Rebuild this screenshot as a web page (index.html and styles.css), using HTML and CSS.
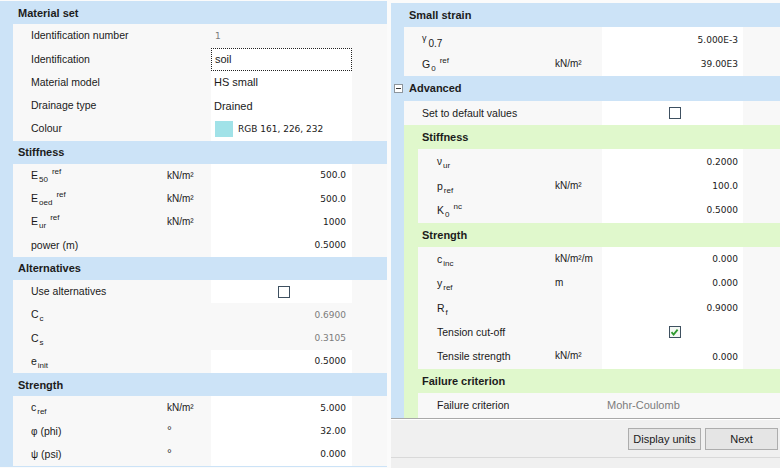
FILE: index.html
```html
<!DOCTYPE html>
<html>
<head>
<meta charset="utf-8">
<link rel="stylesheet" href="styles.css">
</head>
<body>
<div class="panel panel-left">
  <div class="head">Material set</div>
  <div class="group">
    <div class="strip"></div>
    <div class="rows">
      <div class="row"><div class="lbl">Identification number</div><div class="unit"></div><div class="val ro left">1</div><div></div></div>
      <div class="row"><div class="lbl">Identification</div><div class="unit"></div><div class="val left focus txt">soil</div><div></div></div>
      <div class="row"><div class="lbl">Material model</div><div class="unit"></div><div class="val left txt">HS small</div><div></div></div>
      <div class="row"><div class="lbl">Drainage type</div><div class="unit"></div><div class="val left txt">Drained</div><div></div></div>
      <div class="row"><div class="lbl">Colour</div><div class="unit"></div><div class="val left"><span class="swatch"></span>RGB 161, 226, 232</div><div></div></div>
    </div>
  </div>
  <div class="head">Stiffness</div>
  <div class="group">
    <div class="strip"></div>
    <div class="rows">
      <div class="row"><div class="lbl">E<span class="sb">50</span><span class="sp">ref</span></div><div class="unit">kN/m²</div><div class="val">500.0</div><div></div></div>
      <div class="row"><div class="lbl">E<span class="sb">oed</span><span class="sp">ref</span></div><div class="unit">kN/m²</div><div class="val">500.0</div><div></div></div>
      <div class="row"><div class="lbl">E<span class="sb">ur</span><span class="sp">ref</span></div><div class="unit">kN/m²</div><div class="val">1000</div><div></div></div>
      <div class="row"><div class="lbl">power (m)</div><div class="unit"></div><div class="val">0.5000</div><div></div></div>
    </div>
  </div>
  <div class="head">Alternatives</div>
  <div class="group">
    <div class="strip"></div>
    <div class="rows">
      <div class="row"><div class="lbl">Use alternatives</div><div class="unit"></div><div class="val center"><span class="cb"></span></div><div></div></div>
      <div class="row"><div class="lbl">C<span class="sb">c</span></div><div class="unit"></div><div class="val ro">0.6900</div><div></div></div>
      <div class="row"><div class="lbl">C<span class="sb">s</span></div><div class="unit"></div><div class="val ro">0.3105</div><div></div></div>
      <div class="row"><div class="lbl">e<span class="sb">init</span></div><div class="unit"></div><div class="val">0.5000</div><div></div></div>
    </div>
  </div>
  <div class="head">Strength</div>
  <div class="group last">
    <div class="strip"></div>
    <div class="rows">
      <div class="row"><div class="lbl">c<span class="sb">ref</span></div><div class="unit">kN/m²</div><div class="val">5.000</div><div></div></div>
      <div class="row"><div class="lbl"><span class="greek">φ</span> (phi)</div><div class="unit deg">°</div><div class="val">32.00</div><div></div></div>
      <div class="row"><div class="lbl"><span class="greek">ψ</span> (psi)</div><div class="unit deg">°</div><div class="val">0.000</div><div></div></div>
    </div>
  </div>
</div>

<div class="panel panel-right">
  <div class="scroll">
    <div class="head">Small strain</div>
    <div class="group">
      <div class="strip"></div>
      <div class="rows">
        <div class="row"><div class="lbl"><span class="gamma">γ</span><span class="sb big">0.7</span></div><div class="unit"></div><div class="val">5.000E-3</div><div></div></div>
        <div class="row"><div class="lbl">G<span class="sb">0</span><span class="sp">ref</span></div><div class="unit">kN/m²</div><div class="val">39.00E3</div><div></div></div>
      </div>
    </div>
    <div class="head toggle-head"><span class="tog"><span class="minus"></span></span>Advanced</div>
    <div class="group">
      <div class="strip"></div>
      <div class="rows">
        <div class="row"><div class="lbl">Set to default values</div><div class="unit"></div><div class="val center"><span class="cb"></span></div><div></div></div>
        <div class="ghead">Stiffness</div>
        <div class="sub">
          <div class="gstrip"></div>
          <div class="rows">
            <div class="row"><div class="lbl"><span class="greek">ν</span><span class="sb">ur</span></div><div class="unit"></div><div class="val">0.2000</div><div></div></div>
            <div class="row"><div class="lbl">p<span class="sb">ref</span></div><div class="unit">kN/m²</div><div class="val">100.0</div><div></div></div>
            <div class="row"><div class="lbl">K<span class="sb">0</span><span class="sp">nc</span></div><div class="unit"></div><div class="val">0.5000</div><div></div></div>
          </div>
        </div>
        <div class="ghead">Strength</div>
        <div class="sub">
          <div class="gstrip"></div>
          <div class="rows">
            <div class="row"><div class="lbl">c<span class="sb">inc</span></div><div class="unit">kN/m²/m</div><div class="val">0.000</div><div></div></div>
            <div class="row"><div class="lbl">y<span class="sb">ref</span></div><div class="unit">m</div><div class="val">0.000</div><div></div></div>
            <div class="row"><div class="lbl">R<span class="sb">f</span></div><div class="unit"></div><div class="val">0.9000</div><div></div></div>
            <div class="row"><div class="lbl">Tension cut-off</div><div class="unit"></div><div class="val center"><span class="cb checked"><svg width="9" height="9" viewBox="0 0 9 9"><path d="M1.5 4.2 L3.6 6.6 L7.6 1.6" fill="none" stroke="#2f9a2f" stroke-width="1.8"/></svg></span></div><div></div></div>
            <div class="row"><div class="lbl">Tensile strength</div><div class="unit">kN/m²</div><div class="val">0.000</div><div></div></div>
          </div>
        </div>
        <div class="ghead">Failure criterion</div>
        <div class="sub">
          <div class="gstrip"></div>
          <div class="rows">
            <div class="row"><div class="lbl">Failure criterion</div><div class="unit"></div><div class="val ro left txt">Mohr-Coulomb</div><div></div></div>
          </div>
        </div>
      </div>
    </div>
  </div>
  <div class="bar">
    <div class="btnrow">
      <button class="btn">Display units</button>
      <button class="btn">Next</button>
    </div>
  </div>
</div>
</body>
</html>
```

FILE: styles.css
```css
* { box-sizing: border-box; }
html, body { margin: 0; padding: 0; }
body {
  width: 780px;
  height: 468px;
  overflow: hidden;
  background: #fbfbfb;
  font-family: "Liberation Sans", Arial, sans-serif;
  font-size: 11px;
  color: #1a1a1a;
  display: flex;
  gap: 4px;
}
.panel { display: flex; flex-direction: column; }
.panel-left { width: 387px; padding-top: 1px; --rh: 23.25px; }
.panel-right { width: 389px; padding-top: 3px; --rh: 24.4px; }

.head {
  height: var(--rh);
  background: #cce3f7;
  font-weight: bold;
  color: #1c1c1c;
  display: flex;
  align-items: center;
  padding-left: 18px;
  flex: none;
}
.toggle-head { padding-left: 3px; }
.tog {
  width: 9px; height: 9px;
  border: 1px solid #8d959d;
  background: #fff;
  margin-right: 6px;
  display: flex; align-items: center; justify-content: center;
}
.minus { width: 5px; height: 1px; background: #3a3a3a; }

.group { display: flex; background: #cce3f7; }
.group.last { border-bottom: 1px solid #cce3f7; }
.strip { width: 13px; flex: none; }
.rows { flex: 1; display: flex; flex-direction: column; min-width: 0; }

.row {
  display: grid;
  height: var(--rh);
  background: #f8f8f8;
}
.panel-left .row { grid-template-columns: 154px 44px 141px 1fr; }
.panel-right .row { grid-template-columns: 151px 47px 141px 1fr; }
.panel-right .sub .row { grid-template-columns: 137px 47px 141px 1fr; }

.lbl {
  padding-left: 18px;
  line-height: var(--rh);
  height: var(--rh);
  font-size: 10.5px;
  white-space: nowrap;
  overflow: visible;
}
.sub .lbl { padding-left: 19px; }
.unit {
  line-height: var(--rh);
  height: var(--rh);
  font-size: 10px;
  white-space: nowrap;
}
.unit.deg { font-size: 12px; color: #333; }
.val {
  background: #fff;
  display: flex;
  align-items: center;
  justify-content: flex-end;
  padding-right: 6px;
  font-family: "DejaVu Sans", Verdana, sans-serif;
  font-size: 9px;
  color: #1a1a1a;
  white-space: nowrap;
}
.panel-right .val { padding-right: 5px; }
.val.ro { background: transparent; color: #7c7c7c; }
.val.left { justify-content: flex-start; padding-left: 4px; }
.val.txt { font-family: "Liberation Sans", Arial, sans-serif; font-size: 11px; padding-left: 3px; }
.val.ro.txt { padding-left: 5px; }
.val.center { justify-content: center; padding: 0 0 0 4px; }
.focus { border: 1px dotted #222; padding-left: 2px; }

.swatch {
  width: 18px; height: 16px;
  background: rgb(161, 226, 232);
  margin-right: 5px;
  flex: none;
}
.cb {
  width: 12px; height: 12px;
  border: 1px solid #3e5060;
  background: #fff;
  display: flex; align-items: center; justify-content: center;
}
.cb.checked { background: #f4f8f4; }

.sb { font-size: 8px; vertical-align: -3px; margin-left: 1px; line-height: 1; }
.sb.big { font-size: 10px; vertical-align: -4px; margin-left: 2px; }
.sp { font-size: 8px; vertical-align: 5px; margin-left: 4px; line-height: 1; }
.greek { font-size: 10px; }
.gamma { font-size: 9px; vertical-align: 2px; line-height: 1; }

.ghead {
  height: var(--rh);
  background: #e0f8cc;
  font-weight: bold;
  color: #1c1c1c;
  display: flex;
  align-items: center;
  padding-left: 18px;
}
.sub { display: flex; background: #e0f8cc; }
.gstrip { width: 14px; flex: none; }

.scroll { flex: none; display: flex; flex-direction: column; }
.bar {
  flex: 1;
  background: #f0f0f0;
  border-top: 1px solid #a9a9a9;
  box-shadow: inset 0 1px 0 #ffffff;
}
.btnrow {
  height: 39px;
  display: flex;
  justify-content: flex-end;
  align-items: flex-start;
  gap: 4px;
  padding: 9px 2px 0 0;
  border-bottom: 1px solid #d9d9d9;
}
.btn {
  width: 73px;
  height: 22px;
  border: 1px solid #adadad;
  background: #e5e5e5;
  font-family: "Liberation Sans", Arial, sans-serif;
  font-size: 11px;
  color: #1a1a1a;
  padding: 0;
  border-radius: 0;
}
```
